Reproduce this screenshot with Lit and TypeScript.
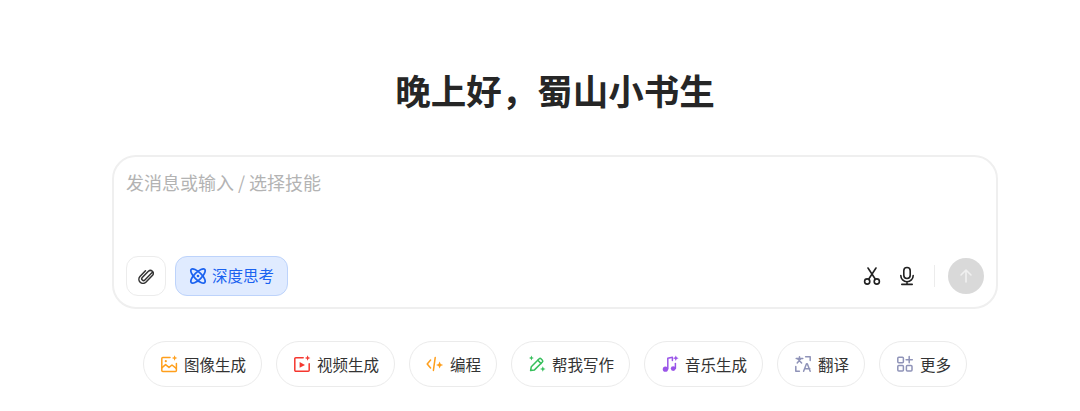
import { LitElement, html, css, svg } from "lit";
import { customElement } from "lit/decorators.js";

const spark = (x: number, y: number, r: number) =>
  svg`<path class="f" d="M${x} ${y - r}l${r * 0.3} ${r * 0.7} ${r * 0.7} ${r * 0.3} -${r * 0.7} ${r * 0.3} -${r * 0.3} ${r * 0.7} -${r * 0.3} -${r * 0.7} -${r * 0.7} -${r * 0.3} ${r * 0.7} -${r * 0.3}z"/>`;

const chips = [
  { label: "图像生成", color: "#ff9f1c", icon: svg`<path d="M10 2.6H2.8a1 1 0 0 0-1 1v11.8a1 1 0 0 0 1 1h12.6a1 1 0 0 0 1-1V8.6"/><path d="M2 12.6l3.6-3 3.4 2.8 3-2.4 4.2 3.4"/><circle class="f" cx="5.8" cy="6.2" r="1.1"/>${spark(14.6, 3, 2.8)}` },
  { label: "视频生成", color: "#f5372f", icon: svg`<path d="M10.2 2.8H2.8a1 1 0 0 0-1 1v11.4a1 1 0 0 0 1 1h12.4a1 1 0 0 0 1-1V8.8"/><path class="f" d="M6.6 7l5.4 2.9-5.4 2.9z"/>${spark(14.6, 3, 2.8)}` },
  { label: "编程", color: "#ff9f1c", icon: svg`<path d="M4.6 5L1.2 9l3.4 4"/><path d="M9.2 2.6L7.4 15.4"/>${spark(13.6, 10, 3.6)}` },
  { label: "帮我写作", color: "#37bf5c", icon: svg`<path d="M2.6 15.6l.7-3.9 7.9-7.9a1.3 1.3 0 0 1 1.8 0l1.4 1.4a1.3 1.3 0 0 1 0 1.8l-7.9 7.9z"/><path d="M9.8 5.2l3.2 3.2"/>${spark(3.4, 3, 2.4)}${spark(14.8, 14, 2.8)}` },
  { label: "音乐生成", color: "#9a55e8", icon: svg`<path d="M6.8 14V3.2l4.6-1v3.4"/><circle class="f" cx="4.4" cy="14.2" r="2.6"/><path d="M14.4 8.4v5"/><circle class="f" cx="12.2" cy="13.6" r="2.4"/>${spark(14.8, 3.2, 2.8)}` },
  { label: "翻译", color: "#8f93b8", icon: svg`<path d="M2.2 3.4h6.6M5.5 1.8v1.6M3.2 8l3.8-4.4M3.8 4l3.8 4"/><path d="M11.6 1.8h4.6v3.6M1.8 11.4v4.8h3.6"/><path d="M9.6 16.2l2.9-7.4h.8l2.9 7.4M10.8 13.8h5"/>` },
  { label: "更多", color: "#8f93b8", icon: svg`<rect x="1.8" y="2.2" width="5.6" height="5.6" rx="1"/><rect x="1.8" y="10.4" width="5.6" height="5.6" rx="1"/><rect x="10.4" y="10.4" width="5.6" height="5.6" rx="1"/><path d="M13.2 1.6v6.2M10.1 4.7h6.2"/>` },
];

@customElement("app-root")
export class AppRoot extends LitElement {
  static styles = css`
    :host {
      display: block;
      height: 411px;
      overflow: hidden;
      background: #fff;
      font-family: "Noto Sans CJK SC", "Liberation Sans", sans-serif;
    }
    .page {
      display: flex;
      flex-direction: column;
      align-items: center;
      width: 1110px;
      padding-top: 64px;
    }
    h1 {
      margin: 0;
      font-size: 35.5px;
      line-height: 52px;
      font-weight: 700;
      color: #262626;
    }
    .card {
      box-sizing: border-box;
      width: 886px;
      height: 154px;
      margin-top: 39px;
      padding: 11px 12px 11.5px;
      border: 2px solid #efefef;
      border-radius: 24px;
      display: flex;
      flex-direction: column;
      justify-content: space-between;
    }
    .placeholder {
      font-size: 18px;
      line-height: 28px;
      color: #b3b3b3;
    }
    .toolbar {
      display: flex;
      align-items: center;
      justify-content: space-between;
    }
    .left, .right, .tools {
      display: flex;
      align-items: center;
    }
    .left { gap: 9px; }
    .tools { gap: 17px; }
    .attach {
      box-sizing: border-box;
      width: 40px;
      height: 40px;
      border: 1px solid #ececec;
      border-radius: 12px;
      display: flex;
      align-items: center;
      justify-content: center;
      color: #333;
    }
    .think {
      box-sizing: border-box;
      height: 40px;
      width: 113px;
      border: 1px solid #bdd3fb;
      border-radius: 12px;
      background: #e0ebff;
      color: #1a62f0;
      font-size: 15.5px;
      display: flex;
      align-items: center;
      justify-content: center;
      gap: 5px;
    }
    .think-label {
      padding-bottom: 2px;
    }
    .tool {
      width: 18px;
      height: 20px;
      display: flex;
      color: #222;
    }
    .divider {
      width: 1px;
      height: 22px;
      background: #ececec;
      margin: 0 13px 0 18px;
    }
    .send {
      width: 36px;
      height: 36px;
      border-radius: 50%;
      background: #d9d9d9;
      display: flex;
      align-items: center;
      justify-content: center;
    }
    .chips {
      display: flex;
      gap: 14px;
      margin-top: 32px;
    }
    .chip {
      box-sizing: border-box;
      height: 46px;
      padding: 0 15px 0 16px;
      border: 1px solid #ebebeb;
      border-radius: 23px;
      display: flex;
      align-items: center;
      gap: 6px;
      font-size: 15.5px;
      color: #333;
    }
    .chip svg {
      width: 18px;
      height: 18px;
      fill: none;
      stroke: currentColor;
      stroke-width: 1.5;
      stroke-linecap: round;
      stroke-linejoin: round;
      flex: none;
    }
    .chip svg .f { fill: currentColor; stroke: none; }
    .chip-label { color: #333; }
  `;

  render() {
    return html`
      <div class="page">
        <h1>晚上好，蜀山小书生</h1>
        <div class="card">
          <div class="placeholder">发消息或输入 / 选择技能</div>
          <div class="toolbar">
            <div class="left">
              <div class="attach">
                <svg width="16" height="16" viewBox="0 0 18 18" fill="none" stroke="currentColor" stroke-width="1.7" stroke-linecap="round" stroke-linejoin="round">
                  <path d="M15.6 5.4L7.7 13.5a2 2 0 0 1-2.9-2.8l6.9-7.1a3.3 3.3 0 0 1 4.7 4.6l-7.6 7.8a4.6 4.6 0 0 1-6.6-6.4L8.4 3.1"/>
                </svg>
              </div>
              <div class="think">
                <svg width="18" height="18" viewBox="0 0 18 18" fill="none" stroke="currentColor" stroke-width="1.7">
                  <ellipse cx="9" cy="9" rx="9.5" ry="3.6" transform="rotate(45 9 9)"/>
                  <ellipse cx="9" cy="9" rx="9.5" ry="3.6" transform="rotate(-45 9 9)"/>
                  <circle cx="9" cy="9" r="1.3" fill="currentColor" stroke="none"/>
                </svg>
                <span class="think-label">深度思考</span>
              </div>
            </div>
            <div class="right">
              <div class="tools">
                <div class="tool">
                  <svg width="18" height="20" viewBox="0 0 18 20" fill="none" stroke="currentColor" stroke-width="1.6" stroke-linecap="round">
                    <circle cx="4.2" cy="15.5" r="2.6"/>
                    <circle cx="13.8" cy="15.5" r="2.6"/>
                    <path d="M5.6 13.3L13 2M12.4 13.3L5 2"/>
                  </svg>
                </div>
                <div class="tool">
                  <svg width="18" height="20" viewBox="0 0 18 20" fill="none" stroke="currentColor" stroke-width="1.6" stroke-linecap="round">
                    <rect x="5.8" y="1.5" width="6.4" height="11" rx="3.2"/>
                    <path d="M2.8 9.5a6.2 6.2 0 0 0 12.4 0M9 15.8v2.4M3.8 18.4h10.4"/>
                  </svg>
                </div>
              </div>
              <div class="divider"></div>
              <div class="send">
                <svg width="16" height="16" viewBox="0 0 16 16" fill="none" stroke="#f0f0f0" stroke-width="1.6" stroke-linecap="round" stroke-linejoin="round">
                  <path d="M8 14V2M3 7l5-5 5 5"/>
                </svg>
              </div>
            </div>
          </div>
        </div>
        <div class="chips">
          ${chips.map(
            (c) => html`
              <div class="chip">
                <svg viewBox="0 0 18 18" style="color:${c.color}">${c.icon}</svg>
                <span class="chip-label">${c.label}</span>
              </div>
            `
          )}
        </div>
      </div>
    `;
  }
}
